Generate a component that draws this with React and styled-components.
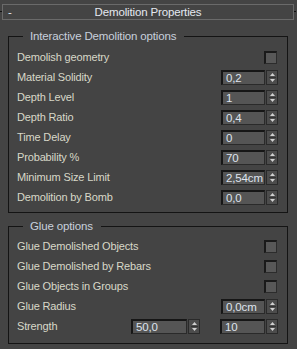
import React from "react";
import styled, { createGlobalStyle } from "styled-components";

const Global = createGlobalStyle`
  html, body { margin: 0; padding: 0; background: #444444; }
  * { box-sizing: border-box; }
`;

const Panel = styled.div`
  width: 297px;
  height: 349px;
  background: #444444;
  font-family: "Liberation Sans", Arial, sans-serif;
  font-size: 11px;
  letter-spacing: -0.15px;
  color: #dcdcdc;
  padding-top: 4px;
  display: flex;
  flex-direction: column;
`;

const TitleBar = styled.div`
  position: relative;
  margin: 0 3px 0 2px;
  height: 16px;
  border: 1px solid #6a6a6a;
  display: flex;
  align-items: center;
  justify-content: center;
  color: #e4e8f0;
  font-size: 11.5px;
  &::before {
    content: "";
    position: absolute;
    left: -3px;
    top: 6px;
    width: 2px;
    height: 1px;
    background: #111;
  }
  &::after {
    content: "";
    position: absolute;
    right: -3px;
    top: 6px;
    width: 2px;
    height: 1px;
    background: #111;
  }
`;

const Collapse = styled.span`
  position: absolute;
  left: 5px;
  top: 0px;
  line-height: 14px;
`;

const Group = styled.fieldset`
  margin: ${(p) => p.$mt}px 9px 0 8px;
  padding: ${(p) => p.$pt}px 9px ${(p) => p.$pb}px 8px;
  border: 1px solid #141414;
  min-width: 0;
  display: flex;
  flex-direction: column;
`;

const Legend = styled.legend`
  margin-left: 6px;
  padding: 0 8px 0 7px;
  color: #c8d0dc;
  font-size: 11.5px;
  line-height: 13px;
`;

const Row = styled.div`
  height: 20px;
  display: flex;
  align-items: center;
  gap: 12px;
`;

const Label = styled.span`
  flex: 1;
  color: #d8d8c8;
  white-space: nowrap;
`;

const Check = styled.div`
  width: 13px;
  height: 13px;
  background: #585858;
  border-top: 2px solid #1a1a1a;
  border-left: 2px solid #1a1a1a;
  border-right: 1px solid #2c2c2c;
  border-bottom: 1px solid #2c2c2c;
  margin-right: 1px;
`;

const SpinWrap = styled.div`
  display: flex;
  align-items: center;
  gap: 1px;
  margin-right: ${(p) => p.$mr || 0}px;
`;

const Field = styled.div`
  width: ${(p) => p.$w}px;
  height: 15px;
  background: #555555;
  border-top: 2px solid #161616;
  border-left: 2px solid #161616;
  border-right: 1px solid #2a2a2a;
  border-bottom: 1px solid #2a2a2a;
  color: #dfe4ee;
  font-size: 11.5px;
  padding-left: 3px;
  line-height: 12px;
  white-space: nowrap;
  overflow: hidden;
`;

const Arrows = styled.div`
  width: 12px;
  height: 15px;
  background: #4c4c4c;
  border: 1px solid #2a2a2a;
  display: flex;
  align-items: center;
  justify-content: center;
`;

function Spinner({ value, w = 44, mr }) {
  return (
    <SpinWrap $mr={mr}>
      <Field $w={w}>{value}</Field>
      <Arrows>
        <svg width="7" height="11" viewBox="0 0 7 11">
          <path d="M3.5 1 L6 4 L1 4 Z" fill="#d0d0d0" />
          <rect x="0" y="5" width="7" height="1" fill="#333" />
          <path d="M1 7 L6 7 L3.5 10 Z" fill="#d0d0d0" />
        </svg>
      </Arrows>
    </SpinWrap>
  );
}

export default function App() {
  return (
    <>
      <Global />
      <Panel>
        <TitleBar>
          <Collapse>-</Collapse>
          Demolition Properties
        </TitleBar>
        <Group $mt={10} $pt={4} $pb={5}>
          <Legend>Interactive Demolition options</Legend>
          <Row>
            <Label>Demolish geometry</Label>
            <Check />
          </Row>
          <Row>
            <Label>Material Solidity</Label>
            <Spinner value="0,2" />
          </Row>
          <Row>
            <Label>Depth Level</Label>
            <Spinner value="1" />
          </Row>
          <Row>
            <Label>Depth Ratio</Label>
            <Spinner value="0,4" />
          </Row>
          <Row>
            <Label>Time Delay</Label>
            <Spinner value="0" />
          </Row>
          <Row>
            <Label>Probability %</Label>
            <Spinner value="70" />
          </Row>
          <Row>
            <Label>Minimum Size Limit</Label>
            <Spinner value="2,54cm" />
          </Row>
          <Row>
            <Label>Demolition by Bomb</Label>
            <Spinner value="0,0" />
          </Row>
        </Group>
        <Group $mt={7} $pt={3} $pb={7}>
          <Legend>Glue options</Legend>
          <Row>
            <Label>Glue Demolished Objects</Label>
            <Check />
          </Row>
          <Row>
            <Label>Glue Demolished by Rebars</Label>
            <Check />
          </Row>
          <Row>
            <Label>Glue Objects in Groups</Label>
            <Check />
          </Row>
          <Row>
            <Label>Glue Radius</Label>
            <Spinner value="0,0cm" />
          </Row>
          <Row>
            <Label>Strength</Label>
            <Spinner value="50,0" w={56} mr={8} />
            <Spinner value="10" w={45} />
          </Row>
        </Group>
      </Panel>
    </>
  );
}
